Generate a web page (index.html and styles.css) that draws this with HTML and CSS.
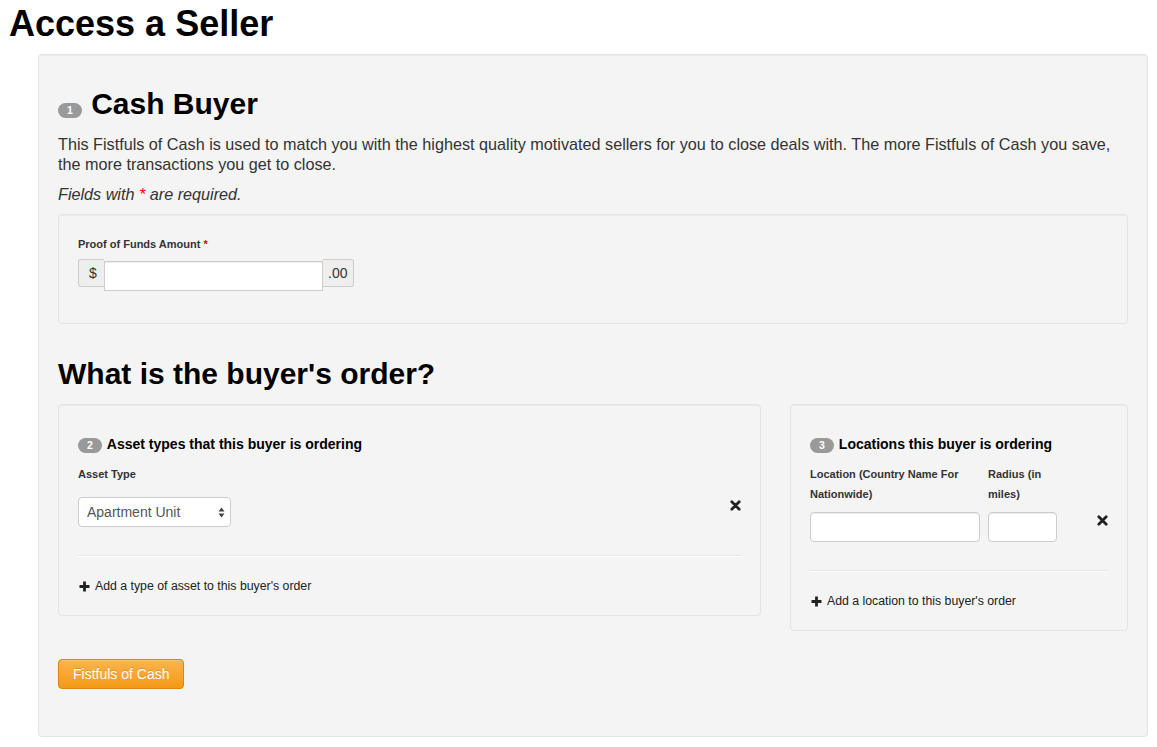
FILE: index.html
```html
<!DOCTYPE html>
<html>
	<head>
		<title>Access a Seller</title>
		<meta name="viewport" content="width=device-width, initial-scale=1">
		<link rel="stylesheet" href="styles.css">
	</head>
	<body>
	<h1 class="page-title">Access a Seller</h1>
	<div class="well">
		<h2 class="step-title"><span class="badge">1</span> Cash Buyer</h2>
		<p class="intro">This Fistfuls of Cash is used to match you with the highest quality motivated sellers for you to close deals with. The more Fistfuls of Cash you save, the more transactions you get to close.</p>
		<p class="note"><em>Fields with <span class="required">*</span> are required.</em></p>

		<div class="box funds-box">
			<label class="field-label" for="amount">Proof of Funds Amount <span class="required">*</span></label>
			<div class="input-prepend">
				<span class="add-on">$</span>
				<input type="text" id="amount" class="amount-input">
				<span class="add-on">.00</span>
			</div>
		</div>

		<h2 class="order-title">What is the buyer's order?</h2>

		<div class="order-row">
			<div class="box asset-box">
				<h4 class="box-title"><span class="badge">2</span>Asset types that this buyer is ordering</h4>
				<div class="field-row">
					<div class="field">
						<label class="field-label">Asset Type</label>
						<div class="select-wrap">
							<select class="select">
								<option>Apartment Unit</option>
							</select>
							<svg class="select-arrows" width="7" height="11" viewBox="0 0 7 11"><path d="M3.5 0.5 L6.5 4.5 L0.5 4.5 Z M3.5 10.5 L6.5 6.5 L0.5 6.5 Z" fill="#444"/></svg>
						</div>
					</div>
					<svg class="remove" width="11" height="11" viewBox="0 0 11 11"><path d="M1.8 1.8 L9.2 9.2 M9.2 1.8 L1.8 9.2" stroke="#222" stroke-width="2.8" stroke-linecap="round"/></svg>
				</div>
				<hr class="divider">
				<a class="add-link" href="#"><svg class="plus" width="11" height="11" viewBox="0 0 11 11"><path d="M5.5 0.5 V10.5 M0.5 5.5 H10.5" stroke="#222" stroke-width="2.8"/></svg>Add a type of asset to this buyer's order</a>
			</div>

			<div class="box location-box">
				<h4 class="box-title"><span class="badge">3</span>Locations this buyer is ordering</h4>
				<div class="field-row">
					<div class="fields">
						<div class="field location-field">
							<label class="field-label">Location (Country Name For Nationwide)</label>
							<input type="text" class="text-input">
						</div>
						<div class="field radius-field">
							<label class="field-label">Radius (in miles)</label>
							<input type="text" class="text-input">
						</div>
					</div>
					<svg class="remove" width="11" height="11" viewBox="0 0 11 11"><path d="M1.8 1.8 L9.2 9.2 M9.2 1.8 L1.8 9.2" stroke="#222" stroke-width="2.8" stroke-linecap="round"/></svg>
				</div>
				<hr class="divider">
				<a class="add-link" href="#"><svg class="plus" width="11" height="11" viewBox="0 0 11 11"><path d="M5.5 0.5 V10.5 M0.5 5.5 H10.5" stroke="#222" stroke-width="2.8"/></svg>Add a location to this buyer's order</a>
			</div>
		</div>

		<div class="form-actions">
			<button type="button" class="btn-warning">Fistfuls of Cash</button>
		</div>
	</div>
	</body>
</html>
```

FILE: styles.css
```css
body{
	margin:0;
	padding:0 8px 0 9px;
	font-family:"Liberation Sans", Arial, sans-serif;
	color:#333;
	background:#fff;
}
.page-title{
	margin:4px 0 10px;
	font-size:36px;
	line-height:40px;
	color:#000;
}
.well{
	margin:0 1px 11px 29px;
	padding:19px 19px 47px;
	background-color:#f4f4f4;
	border:1px solid #e3e3e3;
	border-radius:4px;
	box-shadow:inset 0 1px 1px rgba(0,0,0,0.04);
}
.step-title,
.order-title{
	margin:10px 0;
	font-size:30px;
	line-height:40px;
	color:#000;
}
.step-title .badge{
	margin-right:1px;
}
.order-title{
	margin:30px 0 10px;
}
.intro,
.note{
	margin:0 0 10px;
	font-size:16.2px;
	line-height:20px;
}
.required{
	color:#e00;
}
.badge{
	display:inline-block;
	padding:1px 9px;
	font-size:10.5px;
	line-height:13px;
	font-weight:bold;
	color:#fff;
	background-color:#999;
	border-radius:9px;
	vertical-align:baseline;
}
.box{
	padding:19px;
	background-color:#f4f4f4;
	border:1px solid #e3e3e3;
	border-radius:4px;
	box-shadow:inset 0 1px 1px rgba(0,0,0,0.04);
}
.field-label{
	display:block;
	font-size:11px;
	line-height:20px;
	font-weight:bold;
	color:#333;
}
.funds-box .field-label{
	margin-bottom:5px;
}
.input-prepend{
	display:flex;
	align-items:flex-start;
	margin-bottom:13px;
}
.add-on{
	height:26px;
	line-height:26px;
	padding:0 5px;
	font-size:14px;
	background-color:#eee;
	border:1px solid #ccc;
	color:#333;
}
.add-on:first-child{
	width:15px;
	padding:0 0 0 10px;
	border-radius:3px 0 0 3px;
	border-right:none;
}
.add-on:last-child{
	width:25px;
	padding:0 0 0 5px;
	border-radius:0 3px 3px 0;
	border-left:none;
}
.amount-input{
	box-sizing:border-box;
	width:219px;
	height:30px;
	margin:2px 0 0;
	border:1px solid #ccc;
	background:#fff;
	box-shadow:inset 0 1px 1px rgba(0,0,0,0.075);
	font-family:inherit;
	font-size:14px;
}
.order-row{
	display:flex;
	align-items:flex-start;
	gap:29px;
}
.asset-box{
	width:663px;
}
.location-box{
	flex:1;
}
.asset-box,
.location-box{
	padding-top:20px;
}
.box-title{
	margin:9px 0 10px;
	font-size:14px;
	line-height:20px;
	color:#000;
}
.box-title .badge{
	margin-right:5px;
}
.field-row{
	display:flex;
	align-items:flex-end;
	justify-content:space-between;
}
.fields{
	display:flex;
	gap:8px;
}
.asset-box .field-label{
	margin-bottom:13px;
}
.location-box .field-label{
	margin-bottom:8px;
}
.location-field{
	width:170px;
}
.radius-field{
	width:69px;
}
.remove{
	margin-bottom:16px;
	margin-right:0;
}
.select-wrap{
	position:relative;
	width:153px;
}
.select{
	-webkit-appearance:none;
	appearance:none;
	box-sizing:border-box;
	display:block;
	width:153px;
	height:30px;
	padding:0 0 0 8px;
	font-family:inherit;
	font-size:14px;
	color:#555;
	background:#fff;
	border:1px solid #ccc;
	border-radius:4px;
}
.select-arrows{
	position:absolute;
	right:6px;
	top:10px;
	pointer-events:none;
}
.text-input{
	box-sizing:border-box;
	display:block;
	width:100%;
	height:30px;
	border:1px solid #ccc;
	border-radius:4px;
	background:#fff;
	box-shadow:inset 0 1px 1px rgba(0,0,0,0.075);
}
.divider{
	margin:28px 0 19px;
	border:0;
	border-top:1px solid #e6e6e6;
	border-bottom:1px solid #fff;
}
.add-link{
	display:flex;
	align-items:center;
	font-size:12.3px;
	line-height:20px;
	color:#222;
	text-decoration:none;
}
.plus{
	margin:1px 5px 0 1px;
}
.form-actions{
	margin-top:28px;
}
.btn-warning{
	height:30px;
	padding:0 14px;
	font-family:inherit;
	font-size:14px;
	color:#fff;
	background-color:#f89406;
	background-image:linear-gradient(to bottom, #fbb450, #f39a14);
	border:1px solid #d9870f;
	border-radius:4px;
	text-shadow:0 -1px 0 rgba(0,0,0,0.15);
	box-shadow:inset 0 1px 0 rgba(255,255,255,0.2);
	cursor:pointer;
}
```
